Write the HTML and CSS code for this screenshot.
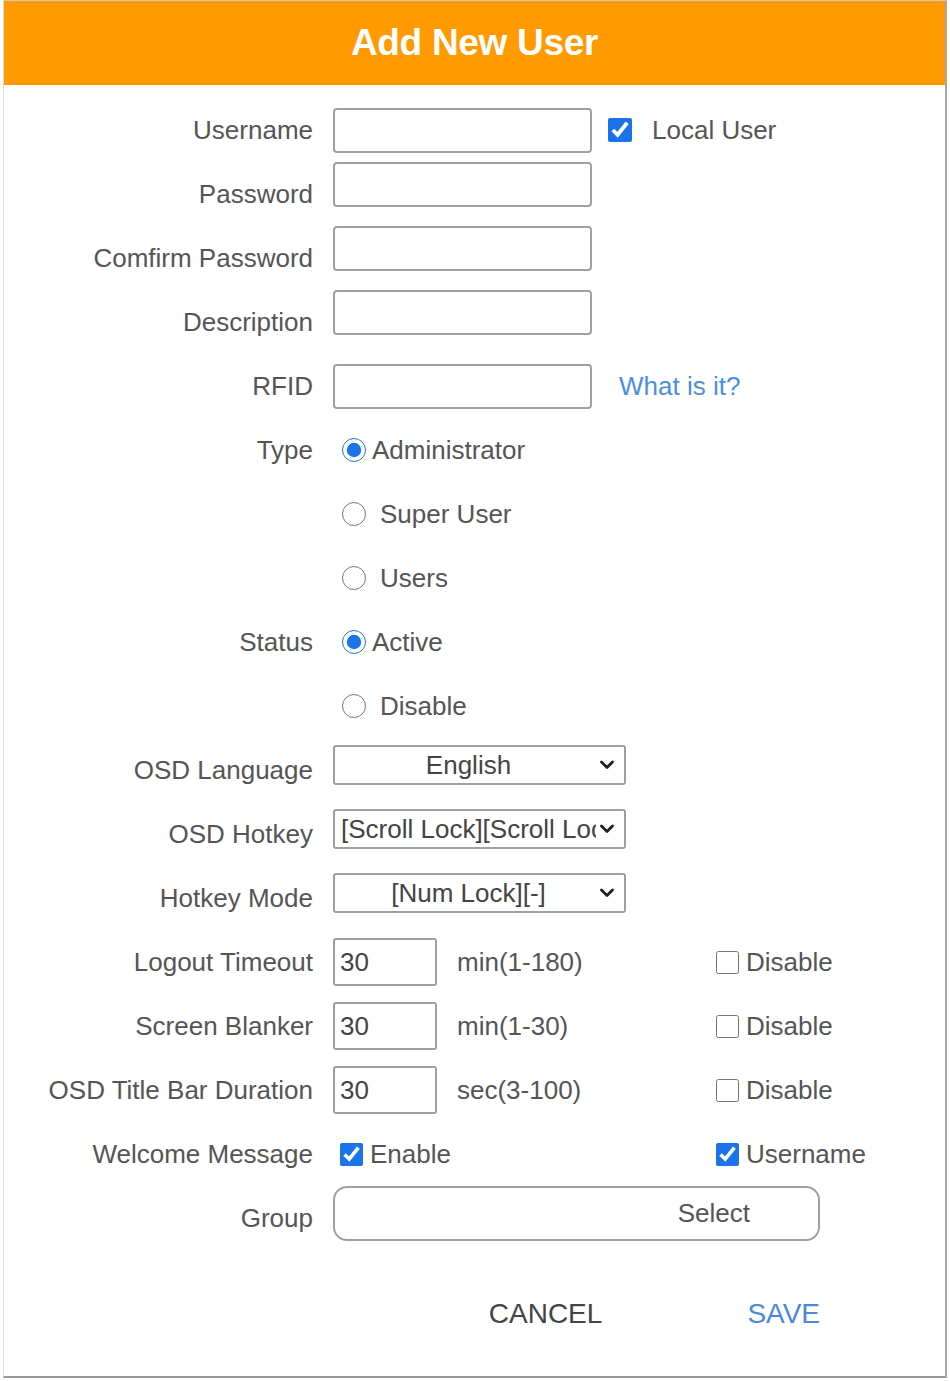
FILE: index.html
```html
<!DOCTYPE html>
<html lang="en">
<head>
<meta charset="utf-8">
<title>Add New User</title>
<link rel="stylesheet" href="styles.css">
</head>
<body>
<div class="dialog">
  <div class="header">Add New User</div>
  <form class="form">
    <div class="row">
      <label class="lbl">Username</label>
      <div class="field">
        <input class="text" type="text">
        <input class="cb cb-local" type="checkbox" checked>
        <span class="local-text">Local User</span>
      </div>
    </div>
    <div class="row row--top">
      <label class="lbl">Password</label>
      <div class="field"><input class="text" type="password"></div>
    </div>
    <div class="row row--top">
      <label class="lbl">Comfirm Password</label>
      <div class="field"><input class="text" type="password"></div>
    </div>
    <div class="row row--top">
      <label class="lbl">Description</label>
      <div class="field"><input class="text" type="text"></div>
    </div>
    <div class="row">
      <label class="lbl">RFID</label>
      <div class="field">
        <input class="text" type="text">
        <a class="help" href="#">What is it?</a>
      </div>
    </div>
    <div class="row">
      <label class="lbl">Type</label>
      <div class="field"><input class="radio" type="radio" name="type" checked><span class="opt opt--on">Administrator</span></div>
    </div>
    <div class="row">
      <span class="lbl"></span>
      <div class="field"><input class="radio" type="radio" name="type"><span class="opt">Super User</span></div>
    </div>
    <div class="row">
      <span class="lbl"></span>
      <div class="field"><input class="radio" type="radio" name="type"><span class="opt">Users</span></div>
    </div>
    <div class="row">
      <label class="lbl">Status</label>
      <div class="field"><input class="radio" type="radio" name="status" checked><span class="opt opt--on">Active</span></div>
    </div>
    <div class="row">
      <span class="lbl"></span>
      <div class="field"><input class="radio" type="radio" name="status"><span class="opt">Disable</span></div>
    </div>
    <div class="row row--top">
      <label class="lbl">OSD Language</label>
      <div class="field">
        <span class="sel-wrap">
          <select class="sel sel--center"><option>English</option></select>
          <svg class="chev" viewBox="0 0 14 10" width="14" height="10"><polyline points="1.5,2 7,7.5 12.5,2" fill="none" stroke="#222" stroke-width="2.8" stroke-linecap="round" stroke-linejoin="round"/></svg>
        </span>
      </div>
    </div>
    <div class="row row--top">
      <label class="lbl">OSD Hotkey</label>
      <div class="field">
        <span class="sel-wrap">
          <select class="sel"><option>[Scroll Lock][Scroll Lock]</option></select>
          <svg class="chev" viewBox="0 0 14 10" width="14" height="10"><polyline points="1.5,2 7,7.5 12.5,2" fill="none" stroke="#222" stroke-width="2.8" stroke-linecap="round" stroke-linejoin="round"/></svg>
        </span>
      </div>
    </div>
    <div class="row row--top">
      <label class="lbl">Hotkey Mode</label>
      <div class="field">
        <span class="sel-wrap">
          <select class="sel sel--center"><option>[Num Lock][-]</option></select>
          <svg class="chev" viewBox="0 0 14 10" width="14" height="10"><polyline points="1.5,2 7,7.5 12.5,2" fill="none" stroke="#222" stroke-width="2.8" stroke-linecap="round" stroke-linejoin="round"/></svg>
        </span>
      </div>
    </div>
    <div class="row">
      <label class="lbl">Logout Timeout</label>
      <div class="field field--grid">
        <input class="num" type="text" value="30">
        <span class="unit">min(1-180)</span>
        <span class="chk"><input class="cb" type="checkbox"><span>Disable</span></span>
      </div>
    </div>
    <div class="row">
      <label class="lbl">Screen Blanker</label>
      <div class="field field--grid">
        <input class="num" type="text" value="30">
        <span class="unit">min(1-30)</span>
        <span class="chk"><input class="cb" type="checkbox"><span>Disable</span></span>
      </div>
    </div>
    <div class="row">
      <label class="lbl">OSD Title Bar Duration</label>
      <div class="field field--grid">
        <input class="num" type="text" value="30">
        <span class="unit">sec(3-100)</span>
        <span class="chk"><input class="cb" type="checkbox"><span>Disable</span></span>
      </div>
    </div>
    <div class="row">
      <label class="lbl">Welcome Message</label>
      <div class="field field--grid">
        <span class="chk chk--wide"><input class="cb" type="checkbox" checked><span>Enable</span></span>
        <span class="chk"><input class="cb" type="checkbox" checked><span>Username</span></span>
      </div>
    </div>
    <div class="row row--top">
      <label class="lbl">Group</label>
      <div class="field"><button class="group-btn" type="button">Select</button></div>
    </div>
    <div class="row actions">
      <span class="lbl"></span>
      <div class="field field--actions">
        <button class="act act--cancel" type="button">CANCEL</button>
        <button class="act act--save" type="button">SAVE</button>
      </div>
    </div>
  </form>
</div>
</body>
</html>
```
FILE: styles.css
```css
* { box-sizing: border-box; }

html, body {
  margin: 0;
  padding: 0;
  background: #fff;
}

body {
  font-family: "Liberation Sans", Arial, sans-serif;
  font-size: 26px;
  color: #555;
}

.dialog {
  width: 944px;
  margin: 0 0 0 3px;
  border-top: 1px solid #d4c8b4;
  border-left: 1px solid #dedede;
  border-right: 2px solid #a8a8a8;
  border-bottom: 2px solid #9a9a9a;
  padding-bottom: 30px;
}

.header {
  height: 84px;
  background: #ff9a00;
  color: #fff;
  font-weight: bold;
  font-size: 37px;
  text-align: center;
  line-height: 84px;
  letter-spacing: -0.3px;
}

.form {
  margin: 0;
  padding-top: 13px;
}

.row {
  display: grid;
  grid-template-columns: 309px 1fr;
  column-gap: 20px;
  align-items: center;
  height: 64px;
}

.row--top .field {
  align-self: start;
}

.lbl {
  text-align: right;
  color: #555;
  white-space: nowrap;
}

.field {
  display: flex;
  align-items: center;
}

.text {
  width: 259px;
  height: 45px;
  border: 2px solid #a0a0a0;
  border-radius: 4px;
  font: inherit;
  color: #333;
  padding: 0 6px;
  background: #fff;
  margin: 0;
}

.cb {
  width: 23px;
  height: 23px;
  margin: 0;
  accent-color: #1a73e8;
  flex: none;
}

.cb-local {
  width: 24px;
  height: 24px;
  margin-left: 16px;
}

.local-text {
  margin-left: 20px;
}

.help {
  margin-left: 27px;
  color: #4a8fe2;
  text-decoration: none;
}

.radio {
  width: 24px;
  height: 24px;
  margin: 0 0 0 9px;
  accent-color: #1a73e8;
  flex: none;
}

.opt {
  margin-left: 14px;
  color: #555;
}

.opt--on {
  margin-left: 6px;
}

.sel-wrap {
  position: relative;
  display: inline-block;
  margin-top: 7px;
}

.sel {
  -webkit-appearance: none;
  appearance: none;
  width: 293px;
  height: 40px;
  border: 2px solid #a0a0a0;
  border-radius: 3px;
  background: #fff;
  font: inherit;
  color: #444;
  padding: 0 28px 0 6px;
  margin: 0;
  display: block;
}

.sel--center {
  text-align: center;
  text-align-last: center;
}

.chev {
  position: absolute;
  right: 12px;
  top: 15px;
  pointer-events: none;
}

.field--grid {
  display: grid;
  grid-template-columns: 104px 239px auto;
  column-gap: 20px;
  align-items: center;
}

.num {
  width: 104px;
  height: 48px;
  border: 2px solid #a0a0a0;
  border-radius: 3px;
  font: inherit;
  color: #444;
  padding: 0 5px;
  margin: 0;
  background: #fff;
}

.unit {
  color: #555;
  white-space: nowrap;
}

.chk {
  display: flex;
  align-items: center;
  gap: 7px;
  white-space: nowrap;
  color: #555;
}

.chk--wide {
  grid-column: 1 / span 2;
  margin-left: 7px;
}

.group-btn {
  width: 487px;
  height: 55px;
  border: 2px solid #a0a0a0;
  border-radius: 14px;
  background: #fff;
  font: inherit;
  color: #555;
  display: flex;
  align-items: center;
  justify-content: flex-end;
  padding: 0 68px 0 0;
  margin: 0;
}

.actions {
  margin-top: 32px;
}

.field--actions {
  width: 487px;
  justify-content: flex-end;
  gap: 145px;
}

.act {
  background: none;
  border: none;
  padding: 0;
  margin: 0;
  font-family: inherit;
  font-size: 28px;
  cursor: pointer;
}

.act--cancel {
  color: #444;
}

.act--save {
  color: #4a8ad8;
}
```
